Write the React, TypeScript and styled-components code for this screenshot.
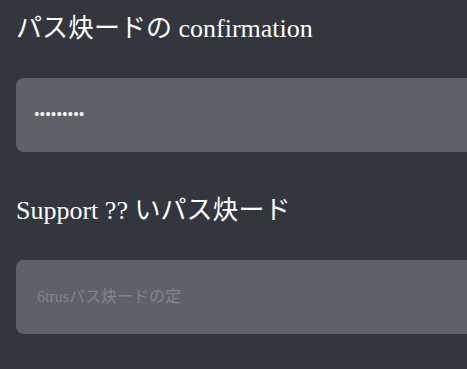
import styled, { createGlobalStyle } from "styled-components";

const GlobalStyle = createGlobalStyle`
  html, body {
    margin: 0;
    padding: 0;
    background: #33363e;
    overflow: hidden;
  }
  body {
    font-family: "Liberation Serif", "Noto Sans CJK JP", serif;
  }
`;

const Form = styled.form`
  display: flex;
  flex-direction: column;
  padding: 12px 0 0 16px;
`;

const Field = styled.div`
  display: flex;
  flex-direction: column;
  margin-bottom: 42px;
`;

const Label = styled.label`
  display: block;
  color: #ffffff;
  font-size: 26px;
  line-height: 33px;
  margin-bottom: 33px;
`;

const Input = styled.input<{ $inset?: number }>`
  box-sizing: content-box;
  width: 100%;
  height: 74px;
  padding: 0 ${(p) => p.$inset ?? 18}px;
  border: none;
  border-radius: 8px;
  outline: none;
  background: #5e6169;
  color: #ffffff;
  font-family: "Liberation Serif", "Noto Sans CJK JP", serif;
  font-size: 16px;

  &::placeholder {
    font-family: "Liberation Serif", "Noto Sans CJK JP", serif;
    font-size: 16px;
    color: #82858b;
  }
`;

export default function App() {
  return (
    <>
      <GlobalStyle />
      <Form onSubmit={(e) => e.preventDefault()}>
        <Field>
          <Label htmlFor="confirm">パス炔ードの confirmation</Label>
          <Input id="confirm" type="password" defaultValue="123456789" />
        </Field>
        <Field>
          <Label htmlFor="support">Support ?? いパス炔ード</Label>
          <Input
            id="support"
            type="text"
            $inset={21}
            placeholder="6trusパス炔ードの定"
          />
        </Field>
      </Form>
    </>
  );
}
